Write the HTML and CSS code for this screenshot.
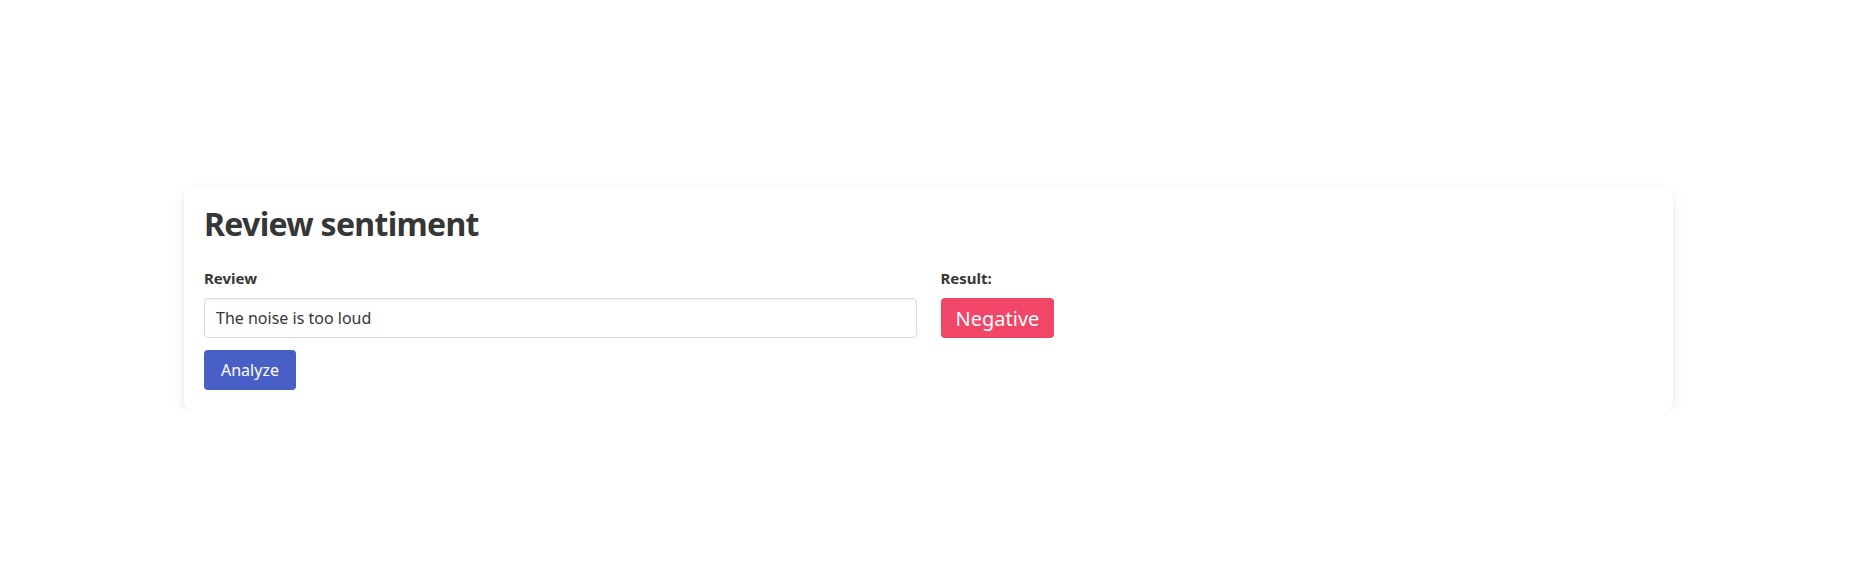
FILE: index.html
```html
<!DOCTYPE html>
<html lang="en">
<head>
<meta charset="utf-8">
<title>Review sentiment</title>
<link rel="stylesheet" href="styles.css">
</head>
<body>
<main class="page">
  <div class="box">
    <h1 class="title">Review sentiment</h1>
    <div class="columns">
      <div class="column">
        <label class="label" for="review">Review</label>
        <input class="input" id="review" type="text" value="The noise is too loud">
        <button class="button" type="button">Analyze</button>
      </div>
      <div class="column">
        <div class="label">Result:</div>
        <span class="tag">Negative</span>
      </div>
    </div>
  </div>
</main>
</body>
</html>
```

FILE: styles.css
```css
html, body {
  margin: 0;
  padding: 0;
  background: #ffffff;
}
body {
  font-family: "Noto Sans", "Open Sans", sans-serif;
  color: #363636;
  font-size: 16px;
}
.page {
  padding: 186px 184px 0;
}
.box {
  background: #fff;
  border-radius: 6px;
  box-shadow: 0 0.5em 1em -0.125em rgba(10,10,10,0.1), 0 0 0 1px rgba(10,10,10,0.02);
  padding: 20px 20px 19px;
}
.title {
  margin: 0 0 24px;
  font-size: 32px;
  font-weight: 700;
  line-height: 36px;
  letter-spacing: -0.7px;
  color: #363636;
}
.columns {
  display: grid;
  grid-template-columns: 1fr 1fr;
  column-gap: 24px;
}
.column {
  display: flex;
  flex-direction: column;
  align-items: flex-start;
}
.label {
  display: block;
  font-size: 15px;
  font-weight: 700;
  line-height: 24px;
  margin-bottom: 8px;
  color: #363636;
}
.input {
  box-sizing: border-box;
  width: 100%;
  height: 40px;
  border: 1px solid #dbdbdb;
  border-radius: 4px;
  box-shadow: inset 0 0.0625em 0.125em rgba(10,10,10,0.05);
  padding: 0 11px;
  font-family: inherit;
  font-size: 16px;
  color: #363636;
  background: #fff;
  margin: 0 0 12px;
}
.button {
  height: 40px;
  border: 0;
  border-radius: 4px;
  background: #485fc7;
  color: #fff;
  font-family: inherit;
  font-size: 16px;
  padding: 0 17px;
}
.tag {
  display: inline-flex;
  align-items: center;
  height: 40px;
  padding: 0 15px;
  border-radius: 4px;
  background: #f14668;
  color: #fff;
  font-size: 20px;
}
```
